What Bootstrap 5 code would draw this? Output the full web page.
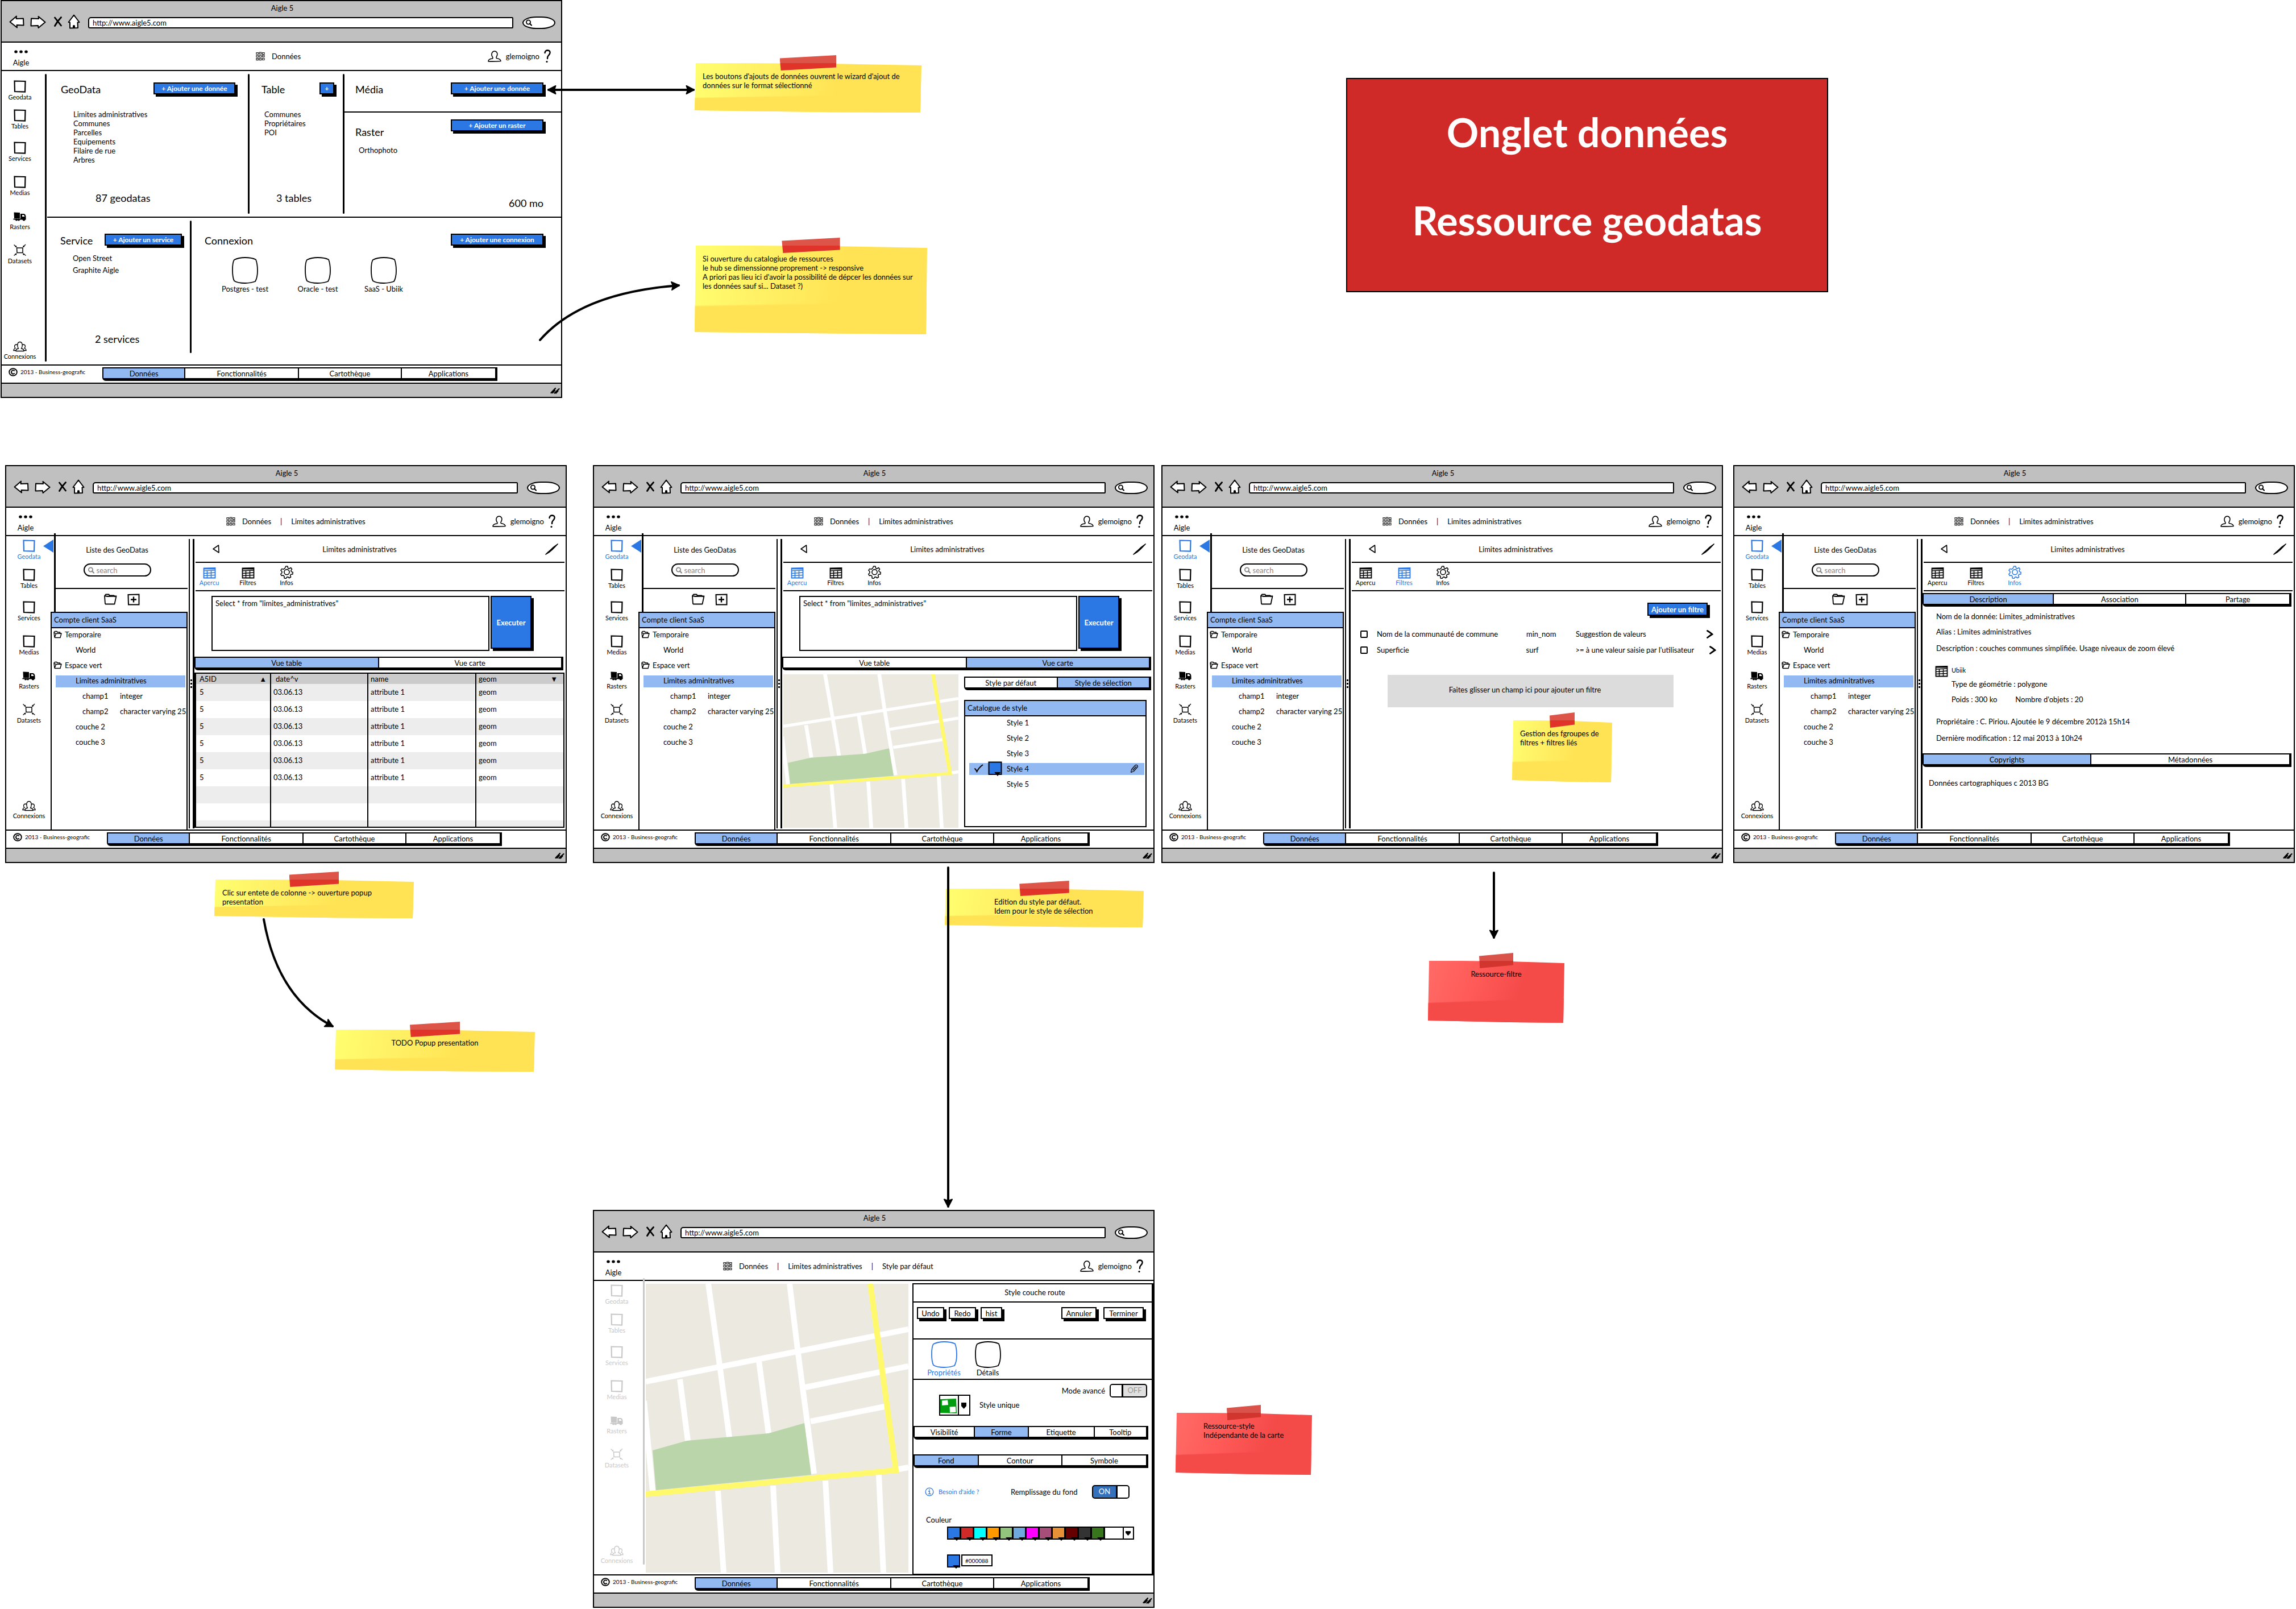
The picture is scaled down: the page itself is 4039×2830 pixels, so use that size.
<!DOCTYPE html>
<html lang="fr">
<head>
<meta charset="utf-8">
<meta name="viewport" content="width=device-width, initial-scale=1">
<title>Aigle 5 - Onglet données</title>
<link href="https://cdn.jsdelivr.net/npm/bootstrap@5.3.0/dist/css/bootstrap.min.css" rel="stylesheet">
<style>
:root { --ink:#000; --blue:#2b78e4; --sky:#93b9f2; --chrome:#c0c0c0; }
body { font-family:Lato,"Noto Sans",sans-serif; font-size:13px; line-height:16px; color:var(--ink); background:#fff; }
svg { display:block; flex:none; }
a { color:inherit; text-decoration:none; }
ul { list-style:none; margin:0; padding:0; }
button, input, textarea { font:inherit; color:inherit; }
.board { position:relative; min-height:2830px; overflow:hidden; }
.title-lg { font-size:18px; line-height:24px; margin:0; font-weight:400; }
.blue { color:var(--blue); }

/* application windows placed on the board */
.win { position:absolute; width:988px; border:2px solid var(--ink); background:#fff; }
.win-1 { left:1px; top:0; }
.win-2 { left:9px; top:818px; }
.win-3 { left:1043px; top:818px; }
.win-4 { left:2043px; top:818px; }
.win-5 { left:3049px; top:818px; }
.win-6 { left:1043px; top:2128px; }
.chrome { background:var(--chrome); border-bottom:2px solid var(--ink); padding:4px 10px 24px 13px; }
.chrome-row { height:22px; margin-top:5px; }
.nav-icons { gap:10px; }
.nav-icons a:nth-child(3) { margin-left:4px; }
.url { height:20px; border:2px solid var(--ink); border-radius:5px 2px 2px 3px; background:#fff; margin:4px 16px 0 14px; padding:0 6px; min-width:0; line-height:16px; }
.lookup { width:58px; height:22px; border:2px solid var(--ink); border-radius:50%/60%; background:#fff; padding-left:3px; margin-top:4px; }
.lookup input { width:34px; border:0; background:none; padding:0; height:14px; }
.topbar { height:50px; border-bottom:2px solid var(--ink); padding-right:18px; }
.brand { width:68px; }
.crumbs { margin-left:319px; }
.crumbs svg { margin-right:12px; }
.win-1 .crumbs { margin-left:379px; }
.win-6 .crumbs { margin-left:159px; }
.user-box { gap:8px; }
.win-body { height:516px; }
.foot { border-top:2px solid var(--ink); padding-top:3px; height:32px; padding-left:12px; }
.foot-note { width:165px; font-size:10px; height:16px; gap:5px; }
.foot-tabs { width:695px; }
.foot-tabs button:nth-child(1) { flex-grow:144; }
.foot-tabs button:nth-child(2) { flex-grow:200; }
.foot-tabs button:nth-child(3) { flex-grow:181; }
.foot-tabs button:nth-child(4) { flex-grow:166; }
.status { background:var(--chrome); border-top:2px solid var(--ink); height:25px; padding-right:2px; }

/* icon rail */
.rail { width:80px; margin-right:4px; padding-bottom:18px; font-size:11px; line-height:12px; }
.win-1 .rail { width:64px; margin-right:12px; padding:10px 0 8px; }
.rail a { height:60px; position:relative; gap:2px; }
.rail a:nth-child(1) { height:42px; }
.rail a:nth-child(2) { height:51px; }
.rail a:nth-child(3) { height:57px; }
.win-2 .rail a:first-child, .win-3 .rail a:first-child, .win-4 .rail a:first-child, .win-5 .rail a:first-child { color:var(--blue); }
.pointer { position:absolute; right:-3px; top:6px; display:none; }
.win-2 .pointer, .win-3 .pointer, .win-4 .pointer, .win-5 .pointer { display:block; }
.win-6 .rail { color:#c8c8c8; margin-right:6px; }
.rule-v { width:3px; background:var(--ink); border-radius:2px; margin:5px 0; flex:none; }
.rule-v.short { margin:5px 0 20px; }
.rule-v.pale { background:#c8c8c8; margin:-5px 2px 17px 0; }

/* sketch buttons and segmented tabs */
.sk-btn { background:var(--blue); color:#fff; border:2px solid var(--ink); border-radius:0; box-shadow:4px 4px 0 #000; height:21px; line-height:16px; padding:0; font-size:12px; font-weight:700; white-space:nowrap; }
.sk-btn.plain { background:#fff; color:#000; font-size:13px; font-weight:400; width:48px; }
.sk-btn.plain.w-hist { width:38px; }
.sk-btn.plain.w-cancel { width:62px; }
.sk-btn.plain.w-done { width:71px; }
.w-add { width:144px; }
.w-wide { width:163px; }
.w-svc { width:136px; }
.w-plus { width:26px; }
.seg { height:24px; border:solid var(--ink); border-width:2px 4px 5px 2px; border-radius:0 0 0 6px; background:#fff; }
.seg button { border:0; border-left:2px solid var(--ink); background:#fff; padding:0; line-height:16px; flex:1 1 0; }
.seg button:first-child { border-left:0; }
.seg button.active { background:var(--sky); }

/* hub */
.hub { min-width:0; }
.hub-top { height:258px; border-bottom:2px solid var(--ink); margin-left:1px; }
.hub-cell { flex:none; width:353px; }
.hub-cell.narrow { width:164px; }
.hub-cell.mid { width:252px; }
.hub-head { padding:19px 22px 0 24px; height:44px; }
.hub-head .sk-btn { margin-bottom:2px; }
.narrow .hub-head { padding:19px 15px 0 21px; }
.hub-head.right { padding-left:19px; padding-right:31px; }
.hub-list { margin:24px 0 0 46px; }
.narrow .hub-list { margin-left:26px; }
.hub-list.roomy { margin-top:9px; line-height:21px; }
.hub-count { margin:auto 0 21px 85px; }
.narrow .hub-count { margin-left:47px; }
.hub-count.low { margin-bottom:33px; }
.media-cell { height:73px; border-bottom:2px solid var(--ink); margin-left:-3px; padding-left:3px; }
.raster-cell .hub-head { padding-top:12px; height:49px; }
.raster-cell .title-lg { margin-top:10px; }
.raster-cell .total { margin:auto 31px 12px; }
.ortho { margin:9px 0 0 25px; }
.hub-head.svc { padding-top:27px; height:52px; padding-right:14px; }
.hub-head.svc.conn { padding-left:23px; padding-right:31px; }
.screens { padding:17px 0 0 30px; }
.screens a { width:128px; gap:1px; }
.screens a.last { width:104px; }

/* resource list panel */
.side { width:235px; flex:none; }
.side-top { border-left:3px solid var(--ink); margin-top:-5px; padding:21px 16px 20px 0; }
.side-tools { border-left:3px solid var(--ink); border-top:2px solid var(--ink); height:42px; padding-top:8px; gap:18px; }
.search-pill { width:119px; height:23px; border:2px solid var(--ink); border-radius:12px; margin-top:16px; padding:0 5px; gap:4px; color:#888; }
.search-pill input { border:0; padding:0; width:80px; background:none; }
.search-pill input::placeholder { color:#888; opacity:1; }
.tree { border:2px solid var(--ink); background:#fff; position:relative; }
.side .tree { margin:0 0 -2px -6px; }
.tree-head { background:var(--sky); border-bottom:2px solid var(--ink); height:27px; padding:4px 4px 0; }
.tree-rows { margin-top:-3px; position:relative; }
.tree-rows li { height:27px; display:flex; align-items:center; white-space:nowrap; margin-right:2px; }
.tree-rows li.on { background:linear-gradient(var(--sky),var(--sky)) 7px 5px/100% 21px no-repeat; }
.tree-rows .lv0 { padding-left:3px; gap:5px; }
.tree-rows .lv1 { padding-left:42px; }
.tree-rows .lv2 { padding-left:54px; }
.fieldname { width:66px; flex:none; }
.splitter { width:10px; margin:5px 0 2px 2px; border-left:2px solid var(--ink); border-right:3px solid var(--ink); flex:none; }

/* resource detail */
.pane { min-width:0; }
.pane-title { height:47px; border-bottom:2px solid var(--ink); margin:0 2px; padding:0 11px 0 30px; }
.pane-title h2 { font-size:13px; line-height:16px; margin:0; padding-right:80px; font-weight:400; }
.pane-tools { height:50px; border-bottom:2px solid var(--ink); margin:0 2px; padding-top:5px; gap:20px; font-size:11px; line-height:14px; }
.pane-tools a { width:48px; height:37px; }
.query { padding:8px 60px 10px 30px; gap:2px; height:115px; }
.query textarea { border:2px solid var(--ink); resize:none; padding:3px 5px; line-height:16px; height:97px; outline:0; }
.query .sk-btn { width:72px; height:93px; font-size:13px; }
.mx-seg { margin-right:4px; }
.datagrid { border:2px solid var(--ink); border-left-width:3px; margin:4px 2px 0 0; height:273px; overflow:hidden; }
.datagrid table { width:100%; table-layout:fixed; border-collapse:collapse; }
.datagrid th { font-weight:400; background:#cbcbcb; height:18px; padding:0 6px; line-height:18px; }
.datagrid td { height:30px; padding:0 6px 3px; }
.datagrid th + th, .datagrid td + td { border-left:2px solid var(--ink); padding-left:4px; }
.datagrid th.inset { padding-left:8px; }
.datagrid tbody tr:nth-child(odd) { background:#ededed; }
.col-id { width:131px; }
.col-date { width:171px; }
.col-name { width:190px; }
.map-row { margin-top:7px; height:270px; gap:10px; padding-left:2px; }
.map-row .tree { margin:17px 12px 0 0; height:224px; }
.tree-rows.styles li { padding-left:73px; }
.tree-rows.styles li.on { padding:0 10px 0 15px; gap:8px; background-position:7px 4px; }
.filters { padding:20px 10px 0 17px; }
.filters .sk-btn { width:106px; height:23px; margin:0 15px 18px 0; line-height:18px; font-size:13px; }
.filter-row { height:28px; }
.filter-row input { appearance:none; width:13px; height:13px; border:2px solid var(--ink); border-radius:2px; margin:0 16px 0 0; }
.filter-row a { width:12px; }
.filter-row.far a { margin-left:6px; }
.f-name { width:292px; }
.f-field { width:87px; }
.f-rule { width:230px; }
.dropzone { background:#dcdcdc; margin:30px 75px 0 48px; height:57px; padding:18px 20px 0 0; }
.info-seg { margin:3px 4px 0 0; }
.info-seg button:nth-child(1) { flex-grow:229; }
.info-seg button:nth-child(2) { flex-grow:233; }
.info-seg button:nth-child(3) { flex-grow:182; }
.info p { margin:0; padding:11px 0 0 24px; }
.info p:first-child { padding-top:9px; }
.info p.wide { padding-top:13px; }
.info p.in { padding-left:51px; }
.info p.in-first { padding-top:4px; }
.info p.apart { padding-top:23px; }
.info p.source { padding:20px 0 0 11px; }
.objects { margin-left:32px; }
.storage { padding:23px 0 0 22px; gap:6px; font-size:11px; }
.meta-seg { margin:19px 4px 0 0; }
.meta-seg button:nth-child(1) { flex-grow:295; }
.meta-seg button:nth-child(2) { flex-grow:350; }

/* style editor */
.map-lg { margin-top:5px; }
.editor { border:2px solid var(--ink); border-right-width:3px; margin:4px 0 0 7px; height:513px; }
.band { border-bottom:2px solid var(--ink); }
.ed-title { height:32px; padding:6px 0 0 8px; }
.ed-actions { height:65px; padding:8px 14px 0 6px; gap:8px; }
.ed-tabs { height:71px; padding:3px 0 0 15px; }
.screen-item { width:77px; }
.ed-style { height:81px; padding:7px 8px 0 45px; }
.ed-style .name { margin:29px 0 0 16px; }
.symbol-pick { width:55px; height:37px; margin-top:19px; }
.ed-seg { margin-right:6px; }
.ed-seg.second { margin-top:26px; }
.seg .w-106 { flex-grow:106; }
.seg .w-94 { flex-grow:94; }
.seg .w-116 { flex-grow:116; }
.seg .w-92 { flex-grow:92; }
.seg .w-112 { flex-grow:112; }
.seg .w-147 { flex-grow:147; }
.seg .w-149 { flex-grow:149; }
.ed-fill { padding:30px 39px 0 20px; }
.help-line { font-size:11px; color:var(--blue); width:151px; gap:8px; }
.ed-label { padding:29px 0 0 22px; }
.ed-colours { padding:4px 0 0 59px; }
.ed-current { margin-top:26px; gap:2px; }
.toggle { border:2px solid var(--ink); border-radius:5px; height:24px; width:66px; overflow:hidden; }
.toggle .knob { width:22px; background:#fff; }
.toggle.off { background:#e0e0e0; color:#999; }
.toggle.off .knob { border-right:3px solid var(--ink); }
.toggle.on { background:#3572bb; color:#fff; }
.toggle.on .knob { border-left:3px solid var(--ink); }
.picker { border:2px solid var(--ink); background:#fff; padding:0; }
.swatches { width:329px; height:23px; }
.sw { width:23px; height:19px; position:relative; border-right:3px solid var(--ink); }
.sw::after { content:""; position:absolute; right:-1px; bottom:-4px; border:6px solid transparent; border-top-color:var(--ink); border-bottom:0; }
.sw.alone { width:19px; border:0; display:block; }
.hexbox { width:55px; height:21px; border:2px solid var(--ink); font-size:10px; padding:0 5px; }

/* sticky notes, banner and arrows */
.note { position:absolute; padding:15px 14px; white-space:nowrap; isolation:isolate; }
.note::before { content:""; position:absolute; inset:0; z-index:-1; clip-path:polygon(2px 0, 25% 0, 60% 1px, 100% 4px, calc(100% - 2px) 100%, 60% 99%, 0 calc(100% - 4px)); background:linear-gradient(179deg,transparent 64%,#ffe354 66%), linear-gradient(100deg,#ffff70 0%,#fff267 25%,#ffea5c 48%,#ffe354 62%); }
.note::after { content:""; position:absolute; left:37.5%; width:25%; top:-14px; height:27px; clip-path:polygon(0 20%,100% 0,100% 80%,2% 100%); background:linear-gradient(#dd5449 0 50%,#e0342a 52%); }
.note.red::before { background:linear-gradient(178deg,transparent 62%,#f44b49 64%), linear-gradient(110deg,#ff6b67 0%,#ff5a57 35%,#f44b49 65%); }
.note.red::after { background:linear-gradient(#d9534a 0 50%,#d2352e 52%); }
.n1 { left:1222px; top:111px; width:399px; height:87px; }
.n2 { left:1222px; top:432px; width:409px; height:156px; }
.n3 { left:377px; top:1547px; width:351px; height:68px; }
.n4 { left:589px; top:1811px; width:352px; height:74px; }
.n5 { left:1662px; top:1563px; width:350px; height:68px; padding-left:87px; }
.n6 { left:2512px; top:1690px; width:240px; height:109px; }
.n7 { left:2068px; top:2485px; width:240px; height:109px; padding-left:49px; }
.n8 { left:2660px; top:1267px; width:176px; height:109px; }
.banner { position:absolute; left:2368px; top:137px; width:848px; height:377px; background:#cf2a27; border:2px solid var(--ink); color:#fff; font-size:70px; line-height:155px; padding-top:16px; font-weight:700; }
.banner h1 { font:inherit; margin:0; }
.arrows { position:absolute; left:0; top:0; pointer-events:none; overflow:visible; }
</style>
<script src="https://cdn.jsdelivr.net/npm/bootstrap@5.3.0/dist/js/bootstrap.bundle.min.js"></script>
</head>
<body>

<svg width="0" height="0" class="position-absolute" aria-hidden="true">
  <symbol id="i-back" viewBox="0 0 27 23"><path d="M1.5 11.5 13 1.5 12.5 6 25 5.5 25.5 17.5 13.5 17 14 21.5Z" fill="#fff" stroke="#000" stroke-width="2" stroke-linejoin="round"/></symbol>
  <symbol id="i-fwd" viewBox="0 0 28 23"><path d="M26.5 12 14.5 2 15 6 2 5.5 1.5 18.5 14 18 14.5 22Z" fill="#fff" stroke="#000" stroke-width="2" stroke-linejoin="round"/></symbol>
  <symbol id="i-stop" viewBox="0 0 14 18"><path d="M1.5 2 12.5 16M12.5 1.5Q6 8 1.5 16.5" fill="none" stroke="#000" stroke-width="2.8" stroke-linecap="round"/></symbol>
  <symbol id="i-home" viewBox="0 0 22 26"><path d="M1.5 14 11 1.5 20.5 14 17.5 14.5 18 24 4 24.5 4 14.5Z" fill="#fff" stroke="#000" stroke-width="2" stroke-linejoin="round"/><path d="M9 24v-4q2-2 4 0v4Z"/></symbol>
  <symbol id="i-mag" viewBox="0 0 12 12"><circle cx="5.5" cy="5" r="3.6" fill="none" stroke="currentColor" stroke-width="1.8"/><path d="m8 7.5 3 3" stroke="currentColor" stroke-width="2.2" stroke-linecap="round"/></symbol>
  <symbol id="i-dots" viewBox="0 0 24 6"><ellipse cx="3" cy="3" rx="2.8" ry="2.5"/><ellipse cx="12" cy="3" rx="2.8" ry="2.5"/><ellipse cx="21" cy="3" rx="2.8" ry="2.5"/></symbol>
  <symbol id="i-grid" viewBox="0 0 16 16"><path fill="none" stroke="#222" stroke-width="1.2" d="M1 1.5h3.4v3H1zM6.3 1.2h3.4v3H6.3zM11.6 1.5H15v3h-3.4zM1 6.5h3.4v3H1zM6.3 6.5h3.4v3H6.3zM11.6 6.2H15v3h-3.4zM1 11.7h3.4v3H1zM6.3 11.7h3.4v3H6.3zM11.6 11.5H15v3h-3.4z"/></symbol>
  <symbol id="i-user" viewBox="0 0 24 20"><path d="M1 19Q1 14.500 8.500 14 9.500 12.500 8 10.500 6 7 7.500 4 9 1 12 1t4.500 3Q17.500 7.500 15.500 10.500 14.500 12.500 15.500 13.500 22.500 14.500 23 18.500Q12 19.500 1 19Z" fill="none" stroke="#000" stroke-width="1.6" stroke-linejoin="round"/></symbol>
  <symbol id="i-help" viewBox="0 0 12 24"><path d="M1.500 6Q2 1.500 6.500 1.500 11 2 10.500 6 10 9 7.500 11 6 12.500 6 16" fill="none" stroke="#000" stroke-width="2.4" stroke-linecap="round"/><circle cx="5" cy="21.500" r="1.600"/></symbol>
  <symbol id="i-box" viewBox="0 0 22 22"><path d="M1.500 1.500 20.500 2 20 20.500 2 20Z" fill="none" stroke="currentColor" stroke-width="2.200"/></symbol>
  <symbol id="i-truck" viewBox="0 0 24 16"><path d="M1.500.5 12 1v10H2Z" fill="currentColor"/><path d="M13 3h6q3 .5 3.500 5v4.500H13Z" fill="currentColor"/><path d="M16 5h3l1.500 3H16Z" fill="#fff"/><path d="M.5 12.500h22" stroke="currentColor" stroke-width="2"/><g fill="currentColor"><circle cx="6" cy="13.500" r="2"/><circle cx="10" cy="13.500" r="2"/><circle cx="19" cy="13.300" r="2.300"/></g></symbol>
  <symbol id="i-data" viewBox="0 0 24 22"><path d="M6.500 7h10.500v8.500H7Z" fill="none" stroke="currentColor" stroke-width="1.500"/><path d="M1.500 1.500 6 5.500M22 1 17.500 5.500M1.500 20.500 6 17M22.500 20.500 17.500 17" stroke="currentColor" stroke-width="1.300"/><path d="M6.500 6 3 5 5.500 2.800ZM17 6 20.500 5 18 2.500ZM6.500 16.500 3 17.500 5.500 20ZM17 16.500 20.500 17.500 18 20Z" fill="currentColor"/></symbol>
  <symbol id="i-people" viewBox="0 0 24 19"><g fill="none" stroke="currentColor" stroke-width="1.300"><path d="M5 17.500Q5 13.500 9.500 13 7.500 10 7.800 6 8.500 1.500 12 1.500T16.200 6Q16.500 10 14.500 13 19 13.500 19 17.500Z"/><path d="M8 7Q5.500 5 3.300 7 1.500 9.500 4 12.500 1 13.500 1 16.500H5M16 7Q18.500 5 20.700 7 22.500 9.500 20 12.500 23 13.500 23 16.500H19"/></g></symbol>
  <symbol id="i-folder" viewBox="0 0 23 20"><path d="M2 18.500 1 4 3 1.500 8.500 1.500 9.500 3.500H17.500L19 6M2 18.500 18.500 18.500 21.500 4.500 6 5 1 4" fill="none" stroke="#000" stroke-width="1.800" stroke-linejoin="round"/></symbol>
  <symbol id="i-folder-sm" viewBox="0 0 15 14"><path d="M2 12.500 1 3 2.500 1.500H6L7 3h4.500V5M2 12.500 12 12.500 14 5 4.500 5.500 1 3.500M2 12.500 4.500 5.500" fill="none" stroke="#000" stroke-width="1.400" stroke-linejoin="round"/></symbol>
  <symbol id="i-plus" viewBox="0 0 22 21"><path d="M1.500 2 20.500 1.500 20.500 19.500 2 19.500Z" fill="none" stroke="#000" stroke-width="2"/><path d="M11 5.500v10M6 10.500h10" stroke="#000" stroke-width="2.400"/></symbol>
  <symbol id="i-table" viewBox="0 0 23 20"><path d="M1.500 1.500 21.500 1 21.500 18.500 1.500 18.500Z" fill="none" stroke="currentColor" stroke-width="1.800"/><path d="M1.500 2.500h20" stroke="currentColor" stroke-width="2"/><path d="M1.500 6 21.500 5M1.500 10.500 21.500 9M1.500 14.500 21.500 13.500M7.500 6V19M14.500 5.500V19" stroke="currentColor" stroke-width="1.500"/></symbol>
  <symbol id="i-gear" viewBox="0 0 23 23"><path d="M9.700 1h3.200l.6 3.200 2.200 1 2.900-1.700 2 2.400-1.700 2.800.7 1.900 2.600.9-.3 3.400-3 .2-1.300 2 1 2.900-2.700 1.700-2.400-2-1.900.4-1.600 2.600-3-.9v-3.200L5.300 17l-3 .6-1.500-2.900L3 12.500 2.900 10.300.9 8.100l1.900-2.700 3 .8 2.500-1.900Z" fill="none" stroke="currentColor" stroke-width="1.500" stroke-linejoin="round"/><circle cx="11.500" cy="11.200" r="4.600" fill="none" stroke="currentColor" stroke-width="1.600"/></symbol>
  <symbol id="i-prev" viewBox="0 0 12 15"><path d="M1 7.500 10.500 1 11 14Z" fill="none" stroke="#000" stroke-width="1.600" stroke-linejoin="round"/></symbol>
  <symbol id="i-slash" viewBox="0 0 23 20"><path d="M22.500.5Q14 6 9 11.500 4 15.500.5 19.500 8 15.500 12.500 11 17 6.500 22.500.5Z" stroke="#000" stroke-width="1.200"/></symbol>
  <symbol id="i-copy" viewBox="0 0 16 15"><ellipse cx="8" cy="7.500" rx="6.800" ry="6.300" fill="none" stroke="#000" stroke-width="1.900"/><path d="M10.800 5.500Q7.500 3 5.300 6 4.300 9 6.800 10.500 9 11.200 10.800 9.300" fill="none" stroke="#000" stroke-width="1.900"/></symbol>
  <symbol id="i-grip" viewBox="0 0 17 12"><path d="M1.500 10Q4 7 9 2M7.500 10.500Q10 7.500 15.500 3M4 10l4-4.500M10 10.500l3.500-4" stroke="#000" stroke-width="2.200" stroke-linecap="round" fill="none"/></symbol>
  <symbol id="i-screen" viewBox="0 0 46 47"><path d="M4 5Q12 1 23 1 35 1 42 4.500 45 12 45 24 45 36 41 43 33 46 23 46 10 46 4 42 1 36 1 23 1 9 4 5Z" fill="#fff" stroke="currentColor" stroke-width="1.800"/></symbol>
  <symbol id="i-check" viewBox="0 0 17 15"><path d="M1.500 7.500Q4 9.500 5.500 13 9 6 16 1" fill="none" stroke="#000" stroke-width="2"/></symbol>
  <symbol id="i-pencil" viewBox="0 0 15 16"><path d="M1.500 14.500 2.500 9.500 9.500 1.500Q13 .5 13.500 4.500L6.500 12.500ZM4.500 11 11 4" fill="none" stroke="#000" stroke-width="1.200" stroke-linejoin="round"/></symbol>
  <symbol id="i-swatch" viewBox="0 0 25 26"><path d="M1.500 1.500H23.500V23H1.500Z" fill="#2b78e4" stroke="#000" stroke-width="2"/><path d="M12 19.500h9.500L17 25.500Z" stroke="#000"/></symbol>
  <symbol id="i-next" viewBox="0 0 12 15"><path d="M1.500 1.500Q6 4 10 7.500 6 10 1.500 13.500" fill="none" stroke="#000" stroke-width="2.800" stroke-linecap="round"/></symbol>
  <symbol id="i-info" viewBox="0 0 16 16"><circle cx="8" cy="8" r="6.900" fill="none" stroke="currentColor" stroke-width="1.300"/><path d="M6 7h2.300v4.500M5.500 11.700h5.500" stroke="currentColor" stroke-width="1.300" fill="none"/><circle cx="8" cy="4.500" r="1" fill="currentColor"/></symbol>
  <symbol id="i-check-tile" viewBox="0 0 30 28"><path d="M0 2 28 1 29 27 0 26Z" fill="#009e0f"/><path d="M3 4.500 13 3.500 14 12 3 13ZM16.500 15.500 27 15 27.500 25 17 25.500Z" fill="#fff"/></symbol>
  <symbol id="map" viewBox="0 0 462 508" preserveAspectRatio="none">
    <path fill="#ece9e1" d="M0 0h462v508H0z"/>
    <path d="M0 172 462 80M110 0 130 143 147 270M253 0 267 115 296 334M60 168 74 276M199 136 216 263M281 182 462 145M290 242 420 216M-3 206 12 364M440 327 462 323M127 364 137 508M224 355 232 508M316 346 325 508M410 336 418 508" fill="none" stroke="#fff" stroke-width="10"/>
    <path fill="#bbd5ab" d="M12 293 72 276 216 263 279 245 291 336 18 363Z"/>
    <path d="M0 370 440 328 395 0" fill="none" stroke="#fff96b" stroke-width="10"/>
  </symbol>
</svg>

<template id="chrome">
  <header class="chrome">
    <div class="text-center">Aigle 5</div>
    <div class="chrome-row d-flex align-items-center">
      <nav class="nav-icons d-flex align-items-center">
        <a href="#" aria-label="Précédent"><svg width="27" height="23"><use href="#i-back"/></svg></a>
        <a href="#" aria-label="Suivant"><svg width="28" height="23"><use href="#i-fwd"/></svg></a>
        <a href="#" aria-label="Arrêter"><svg width="14" height="18"><use href="#i-stop"/></svg></a>
        <a href="#" aria-label="Accueil"><svg width="22" height="26"><use href="#i-home"/></svg></a>
      </nav>
      <input class="url flex-grow-1" type="text" aria-label="Adresse" value="http://www.aigle5.com">
      <label class="lookup d-flex align-items-center"><svg width="12" height="12"><use href="#i-mag"/></svg><input type="text" aria-label="Recherche web"></label>
    </div>
  </header>
</template>

<template id="brand">
  <a href="#" class="brand d-flex flex-column align-items-center justify-content-center gap-2"><svg width="24" height="6" class="mt-2"><use href="#i-dots"/></svg>Aigle</a>
</template>

<template id="user">
  <div class="user-box d-flex align-items-center ms-auto">
    <svg width="24" height="20"><use href="#i-user"/></svg><a href="#">glemoigno</a>
    <a href="#" aria-label="Aide"><svg width="12" height="24"><use href="#i-help"/></svg></a>
  </div>
</template>

<template id="rail">
  <nav class="rail d-flex flex-column flex-shrink-0">
    <a href="#" class="d-flex flex-column align-items-center justify-content-end"><svg width="22" height="22"><use href="#i-box"/></svg>Geodata<svg class="pointer" width="18" height="23"><path d="M0 11.500 18 0v23Z" fill="#2b78e4"/></svg></a>
    <a href="#" class="d-flex flex-column align-items-center justify-content-end"><svg width="22" height="22"><use href="#i-box"/></svg>Tables</a>
    <a href="#" class="d-flex flex-column align-items-center justify-content-end"><svg width="22" height="22"><use href="#i-box"/></svg>Services</a>
    <a href="#" class="d-flex flex-column align-items-center justify-content-end"><svg width="22" height="22"><use href="#i-box"/></svg>Medias</a>
    <a href="#" class="d-flex flex-column align-items-center justify-content-end"><svg width="24" height="20"><use href="#i-truck"/></svg>Rasters</a>
    <a href="#" class="d-flex flex-column align-items-center justify-content-end"><svg width="24" height="22"><use href="#i-data"/></svg>Datasets</a>
    <a href="#" class="d-flex flex-column align-items-center justify-content-end mt-auto"><svg width="24" height="19"><use href="#i-people"/></svg>Connexions</a>
  </nav>
</template>

<template id="foot">
  <footer>
    <div class="foot d-flex align-items-start">
      <div class="foot-note d-flex align-items-center"><svg width="16" height="15"><use href="#i-copy"/></svg>2013 - Business-geografic</div>
      <div class="seg foot-tabs d-flex"><button type="button" class="active">Données</button><button type="button">Fonctionnalités</button><button type="button">Cartothèque</button><button type="button">Applications</button></div>
    </div>
    <div class="status d-flex align-items-center justify-content-end"><svg width="17" height="12"><use href="#i-grip"/></svg></div>
  </footer>
</template>

<template id="crumbs">
  <nav class="crumbs d-flex align-items-center"><svg width="16" height="16"><use href="#i-grid"/></svg><a href="#">Données</a><span class="mx-3">|</span><a href="#">Limites administratives</a></nav>
</template>

<template id="side">
  <aside class="side d-flex flex-column">
    <div class="side-top d-flex flex-column align-items-center">
      <div>Liste des GeoDatas</div>
      <label class="search-pill d-flex align-items-center"><svg width="12" height="12"><use href="#i-mag"/></svg><input type="text" placeholder="search" aria-label="Rechercher une donnée"></label>
    </div>
    <div class="side-tools d-flex align-items-start justify-content-center">
      <a href="#" aria-label="Nouveau dossier"><svg width="23" height="20"><use href="#i-folder"/></svg></a>
      <a href="#" aria-label="Ajouter"><svg width="22" height="21"><use href="#i-plus"/></svg></a>
    </div>
    <div class="tree flex-grow-1">
      <div class="tree-head">Compte client SaaS</div>
      <ul class="tree-rows">
        <li class="lv0"><svg width="15" height="14"><use href="#i-folder-sm"/></svg>Temporaire</li>
        <li class="lv1">World</li>
        <li class="lv0"><svg width="15" height="14"><use href="#i-folder-sm"/></svg>Espace vert</li>
        <li class="lv1 on">Limites adminitratives</li>
        <li class="lv2"><span class="fieldname">champ1</span>integer</li>
        <li class="lv2"><span class="fieldname">champ2</span>character varying 25</li>
        <li class="lv1">couche 2</li>
        <li class="lv1">couche 3</li>
      </ul>
    </div>
  </aside>
  <div class="splitter d-flex align-items-center justify-content-center"><svg width="3" height="16"><path d="M0 0h3v3H0zM0 6h3v3H0zM0 12h3v3H0z"/></svg></div>
</template>

<template id="pane-title">
  <div class="pane-title d-flex align-items-center">
    <a href="#" aria-label="Retour"><svg width="12" height="15"><use href="#i-prev"/></svg></a>
    <h2 class="flex-grow-1 text-center">Limites administratives</h2>
    <a href="#" aria-label="Modifier"><svg width="23" height="20"><use href="#i-slash"/></svg></a>
  </div>
</template>

<template id="query">
  <div class="query d-flex">
    <textarea class="flex-grow-1" aria-label="Requête">Select * from "limites_administratives"</textarea>
    <button type="button" class="sk-btn">Executer</button>
  </div>
</template>

<main class="board">

  <!-- hub -->
  <section class="win win-1">
    <div data-tpl="chrome"></div>
    <div class="topbar d-flex">
      <div data-tpl="brand"></div>
      <nav class="crumbs d-flex align-items-center"><svg width="16" height="16"><use href="#i-grid"/></svg><a href="#">Données</a></nav>
      <div data-tpl="user"></div>
    </div>
    <div class="win-body d-flex">
      <div data-tpl="rail"></div>
      <div class="rule-v"></div>
      <div class="hub flex-grow-1 d-flex flex-column">
        <div class="hub-top d-flex">
          <section class="hub-cell d-flex flex-column">
            <div class="hub-head d-flex align-items-center justify-content-between"><h2 class="title-lg">GeoData</h2><button type="button" class="sk-btn w-add">+ Ajouter une donnée</button></div>
            <ul class="hub-list"><li>Limites administratives</li><li>Communes</li><li>Parcelles</li><li>Equipements</li><li>Filaire de rue</li><li>Arbres</li></ul>
            <div class="title-lg hub-count">87 geodatas</div>
          </section>
          <div class="rule-v"></div>
          <section class="hub-cell narrow d-flex flex-column">
            <div class="hub-head d-flex align-items-center justify-content-between"><h2 class="title-lg">Table</h2><button type="button" class="sk-btn w-plus" aria-label="Ajouter une table">+</button></div>
            <ul class="hub-list"><li>Communes</li><li>Propriétaires</li><li>POI</li></ul>
            <div class="title-lg hub-count">3 tables</div>
          </section>
          <div class="rule-v"></div>
          <div class="flex-grow-1 d-flex flex-column">
            <section class="media-cell"><div class="hub-head right d-flex align-items-center justify-content-between"><h2 class="title-lg">Média</h2><button type="button" class="sk-btn w-wide">+ Ajouter une donnée</button></div></section>
            <section class="raster-cell flex-grow-1 d-flex flex-column">
              <div class="hub-head right d-flex align-items-start justify-content-between"><h2 class="title-lg">Raster</h2><button type="button" class="sk-btn w-wide">+ Ajouter un raster</button></div>
              <div class="ortho">Orthophoto</div>
              <div class="title-lg total text-end">600 mo</div>
            </section>
          </div>
        </div>
        <div class="d-flex flex-grow-1">
          <section class="hub-cell mid d-flex flex-column">
            <div class="hub-head svc d-flex align-items-center justify-content-between"><h2 class="title-lg">Service</h2><button type="button" class="sk-btn w-svc">+ Ajouter un service</button></div>
            <ul class="hub-list roomy"><li>Open Street</li><li>Graphite Aigle</li></ul>
            <div class="title-lg hub-count low">2 services</div>
          </section>
          <div class="rule-v short"></div>
          <section class="flex-grow-1">
            <div class="hub-head svc conn d-flex align-items-center justify-content-between"><h2 class="title-lg">Connexion</h2><button type="button" class="sk-btn w-wide">+ Ajouter une connexion</button></div>
            <div class="screens d-flex">
              <a href="#" class="d-flex flex-column align-items-center"><svg width="46" height="47"><use href="#i-screen"/></svg>Postgres - test</a>
              <a href="#" class="d-flex flex-column align-items-center"><svg width="46" height="47"><use href="#i-screen"/></svg>Oracle - test</a>
              <a href="#" class="last d-flex flex-column align-items-center"><svg width="46" height="47"><use href="#i-screen"/></svg>SaaS - Ubiik</a>
            </div>
          </section>
        </div>
      </div>
    </div>
    <div data-tpl="foot"></div>
  </section>

  <!-- aperçu, vue table -->
  <section class="win win-2">
    <div data-tpl="chrome"></div>
    <div class="topbar d-flex"><div data-tpl="brand"></div><div data-tpl="crumbs"></div><div data-tpl="user"></div></div>
    <div class="win-body d-flex">
      <div data-tpl="rail"></div>
      <div data-tpl="side"></div>
      <div class="pane flex-grow-1">
        <div data-tpl="pane-title"></div>
        <nav class="pane-tools d-flex">
          <a href="#" class="blue d-flex flex-column align-items-center justify-content-end"><svg width="23" height="20"><use href="#i-table"/></svg>Apercu</a>
          <a href="#" class="d-flex flex-column align-items-center justify-content-end"><svg width="23" height="20"><use href="#i-table"/></svg>Filtres</a>
          <a href="#" class="d-flex flex-column align-items-center justify-content-end"><svg width="23" height="23"><use href="#i-gear"/></svg>Infos</a>
        </nav>
        <div data-tpl="query"></div>
        <div class="seg mx-seg d-flex"><button type="button" class="active">Vue table</button><button type="button">Vue carte</button></div>
        <div class="datagrid">
          <table>
            <colgroup><col class="col-id"><col class="col-date"><col class="col-name"><col></colgroup>
            <thead><tr><th><span class="d-flex justify-content-between">A5ID<span>▲</span></span></th><th class="inset">date^v</th><th>name</th><th><span class="d-flex justify-content-between pe-1">geom<span>▼</span></span></th></tr></thead>
            <tbody>
              <tr><td>5</td><td>03.06.13</td><td>attribute 1</td><td>geom</td></tr>
              <tr><td>5</td><td>03.06.13</td><td>attribute 1</td><td>geom</td></tr>
              <tr><td>5</td><td>03.06.13</td><td>attribute 1</td><td>geom</td></tr>
              <tr><td>5</td><td>03.06.13</td><td>attribute 1</td><td>geom</td></tr>
              <tr><td>5</td><td>03.06.13</td><td>attribute 1</td><td>geom</td></tr>
              <tr><td>5</td><td>03.06.13</td><td>attribute 1</td><td>geom</td></tr>
              <tr><td></td><td></td><td></td><td></td></tr>
              <tr><td></td><td></td><td></td><td></td></tr>
              <tr><td></td><td></td><td></td><td></td></tr>
            </tbody>
          </table>
        </div>
      </div>
    </div>
    <div data-tpl="foot"></div>
  </section>

  <!-- aperçu, vue carte -->
  <section class="win win-3">
    <div data-tpl="chrome"></div>
    <div class="topbar d-flex"><div data-tpl="brand"></div><div data-tpl="crumbs"></div><div data-tpl="user"></div></div>
    <div class="win-body d-flex">
      <div data-tpl="rail"></div>
      <div data-tpl="side"></div>
      <div class="pane flex-grow-1">
        <div data-tpl="pane-title"></div>
        <nav class="pane-tools d-flex">
          <a href="#" class="blue d-flex flex-column align-items-center justify-content-end"><svg width="23" height="20"><use href="#i-table"/></svg>Apercu</a>
          <a href="#" class="d-flex flex-column align-items-center justify-content-end"><svg width="23" height="20"><use href="#i-table"/></svg>Filtres</a>
          <a href="#" class="d-flex flex-column align-items-center justify-content-end"><svg width="23" height="23"><use href="#i-gear"/></svg>Infos</a>
        </nav>
        <div data-tpl="query"></div>
        <div class="seg mx-seg d-flex"><button type="button">Vue table</button><button type="button" class="active">Vue carte</button></div>
        <div class="map-row d-flex">
          <svg width="308" height="270"><use href="#map"/></svg>
          <div class="flex-grow-1 pt-1">
            <div class="seg mx-seg d-flex"><button type="button">Style par défaut</button><button type="button" class="active">Style de sélection</button></div>
            <div class="tree">
              <div class="tree-head">Catalogue de style</div>
              <ul class="tree-rows styles">
                <li>Style 1</li><li>Style 2</li><li>Style 3</li>
                <li class="on"><svg width="17" height="15"><use href="#i-check"/></svg><svg width="25" height="26"><use href="#i-swatch"/></svg><span>Style 4</span><a href="#" class="ms-auto" aria-label="Modifier le style"><svg width="15" height="16"><use href="#i-pencil"/></svg></a></li>
                <li>Style 5</li>
              </ul>
            </div>
          </div>
        </div>
      </div>
    </div>
    <div data-tpl="foot"></div>
  </section>

  <!-- filtres -->
  <section class="win win-4">
    <div data-tpl="chrome"></div>
    <div class="topbar d-flex"><div data-tpl="brand"></div><div data-tpl="crumbs"></div><div data-tpl="user"></div></div>
    <div class="win-body d-flex">
      <div data-tpl="rail"></div>
      <div data-tpl="side"></div>
      <div class="pane flex-grow-1">
        <div data-tpl="pane-title"></div>
        <nav class="pane-tools d-flex">
          <a href="#" class="d-flex flex-column align-items-center justify-content-end"><svg width="23" height="20"><use href="#i-table"/></svg>Apercu</a>
          <a href="#" class="blue d-flex flex-column align-items-center justify-content-end"><svg width="23" height="20"><use href="#i-table"/></svg>Filtres</a>
          <a href="#" class="d-flex flex-column align-items-center justify-content-end"><svg width="23" height="23"><use href="#i-gear"/></svg>Infos</a>
        </nav>
        <div class="filters">
          <div class="text-end"><button type="button" class="sk-btn">Ajouter un filtre</button></div>
          <div class="filter-row d-flex align-items-center"><label class="f-name d-flex align-items-center"><input type="checkbox">Nom de la communauté de commune</label><span class="f-field">min_nom</span><span class="f-rule">Suggestion de valeurs</span><a href="#" aria-label="Ouvrir"><svg width="12" height="15"><use href="#i-next"/></svg></a></div>
          <div class="filter-row far d-flex align-items-center"><label class="f-name d-flex align-items-center"><input type="checkbox">Superficie</label><span class="f-field">surf</span><span class="f-rule">&gt;= à une valeur saisie par l'utilisateur</span><a href="#" aria-label="Ouvrir"><svg width="12" height="15"><use href="#i-next"/></svg></a></div>
          <div class="dropzone text-center">Faites glisser un champ ici pour ajouter un filtre</div>
        </div>
      </div>
    </div>
    <div data-tpl="foot"></div>
  </section>

  <!-- infos -->
  <section class="win win-5">
    <div data-tpl="chrome"></div>
    <div class="topbar d-flex"><div data-tpl="brand"></div><div data-tpl="crumbs"></div><div data-tpl="user"></div></div>
    <div class="win-body d-flex">
      <div data-tpl="rail"></div>
      <div data-tpl="side"></div>
      <div class="pane flex-grow-1">
        <div data-tpl="pane-title"></div>
        <nav class="pane-tools d-flex">
          <a href="#" class="d-flex flex-column align-items-center justify-content-end"><svg width="23" height="20"><use href="#i-table"/></svg>Apercu</a>
          <a href="#" class="d-flex flex-column align-items-center justify-content-end"><svg width="23" height="20"><use href="#i-table"/></svg>Filtres</a>
          <a href="#" class="blue d-flex flex-column align-items-center justify-content-end"><svg width="23" height="23"><use href="#i-gear"/></svg>Infos</a>
        </nav>
        <div class="seg info-seg d-flex"><button type="button" class="active">Description</button><button type="button">Association</button><button type="button">Partage</button></div>
        <div class="info">
          <p>Nom de la donnée: Limites_administratives</p>
          <p>Alias : Limites administratives</p>
          <p class="wide">Description : couches communes simplifiée. Usage niveaux de zoom élevé</p>
          <div class="storage d-flex"><svg width="23" height="20"><use href="#i-table"/></svg>Ubiik</div>
          <p class="in in-first">Type de géométrie : polygone</p>
          <p class="in">Poids : 300 ko<span class="objects">Nombre d'objets : 20</span></p>
          <p class="apart">Propriétaire : C. Piriou. Ajoutée le 9 décembre 2012à 15h14</p>
          <p class="wide">Dernière modification : 12 mai 2013 à 10h24</p>
        </div>
        <div class="seg meta-seg d-flex"><button type="button" class="active">Copyrights</button><button type="button">Métadonnées</button></div>
        <div class="info"><p class="source">Données cartographiques c 2013 BG</p></div>
      </div>
    </div>
    <div data-tpl="foot"></div>
  </section>

  <!-- éditeur de style -->
  <section class="win win-6">
    <div data-tpl="chrome"></div>
    <div class="topbar d-flex"><div data-tpl="brand"></div>
      <nav class="crumbs d-flex align-items-center"><svg width="16" height="16"><use href="#i-grid"/></svg><a href="#">Données</a><span class="mx-3">|</span><a href="#">Limites administratives</a><span class="mx-3">|</span><a href="#">Style par défaut</a></nav>
      <div data-tpl="user"></div></div>
    <div class="win-body d-flex">
      <div data-tpl="rail"></div>
      <div class="rule-v pale"></div>
      <svg width="462" height="508" class="map-lg"><use href="#map"/></svg>
      <div class="editor flex-grow-1">
        <div class="band ed-title text-center">Style couche route</div>
        <div class="band ed-actions d-flex">
          <button type="button" class="sk-btn plain">Undo</button><button type="button" class="sk-btn plain">Redo</button><button type="button" class="sk-btn plain w-hist me-auto">hist</button>
          <button type="button" class="sk-btn plain w-cancel me-1">Annuler</button><button type="button" class="sk-btn plain w-done">Terminer</button>
        </div>
        <div class="band ed-tabs d-flex">
          <a href="#" class="screen-item blue d-flex flex-column align-items-center"><svg width="46" height="47"><use href="#i-screen"/></svg>Propriétés</a>
          <a href="#" class="screen-item d-flex flex-column align-items-center"><svg width="46" height="47"><use href="#i-screen"/></svg>Détails</a>
        </div>
        <div class="ed-style d-flex align-items-start">
          <button type="button" class="picker symbol-pick d-flex align-items-stretch" aria-label="Choisir un symbole">
            <svg width="30" height="28" class="mt-1"><use href="#i-check-tile"/></svg>
            <svg width="20" height="33" class="ms-auto"><path d="M1 0v33" stroke="#000" stroke-width="2"/><path d="M6 12h9v6l-4.500 5L6 18Z"/></svg>
          </button>
          <span class="name">Style unique</span>
          <label class="d-flex align-items-center ms-auto gap-2">Mode avancé
            <input type="checkbox" class="visually-hidden"><span class="toggle off d-flex"><span class="knob"></span><span class="flex-grow-1 text-center lh-base">OFF</span></span></label>
        </div>
        <div class="seg ed-seg d-flex"><button type="button" class="w-106">Visibilité</button><button type="button" class="w-94 active">Forme</button><button type="button" class="w-116">Etiquette</button><button type="button" class="w-92">Tooltip</button></div>
        <div class="seg ed-seg second d-flex"><button type="button" class="w-112 active">Fond</button><button type="button" class="w-147">Contour</button><button type="button" class="w-149">Symbole</button></div>
        <div class="ed-fill d-flex align-items-center">
          <a href="#" class="help-line d-flex align-items-center"><svg width="16" height="16"><use href="#i-info"/></svg>Besoin d'aide ?</a>
          <label class="d-flex align-items-center justify-content-between flex-grow-1">Remplissage du fond
            <input type="checkbox" class="visually-hidden" checked><span class="toggle on d-flex"><span class="flex-grow-1 text-center lh-base">ON</span><span class="knob"></span></span></label>
        </div>
        <div class="ed-label">Couleur</div>
        <div class="ed-colours">
          <button type="button" class="picker swatches d-flex" aria-label="Choisir une couleur">
            <span class="sw" style="background:#2b78e4"></span><span class="sw" style="background:#cf2a27"></span><span class="sw" style="background:#00ffff"></span><span class="sw" style="background:#ff9900"></span><span class="sw" style="background:#93c47d"></span><span class="sw" style="background:#6fa8dc"></span><span class="sw" style="background:#ff00ff"></span><span class="sw" style="background:#a64d79"></span><span class="sw" style="background:#e69138"></span><span class="sw" style="background:#660000"></span><span class="sw" style="background:#333333"></span><span class="sw" style="background:#38761d"></span>
            <svg width="18" height="19" class="ms-auto"><path d="M1 0v19" stroke="#000" stroke-width="2"/><path d="M5 6h9v3l-4.500 5L5 9Z"/></svg>
          </button>
          <div class="ed-current d-flex">
            <button type="button" class="picker" aria-label="Couleur active"><span class="sw alone" style="background:#2b78e4"></span></button>
            <input type="text" class="hexbox" aria-label="Code couleur" value="#000088">
          </div>
        </div>
      </div>
    </div>
    <div data-tpl="foot"></div>
  </section>

  <div class="banner text-center"><h1>Onglet données<br>Ressource geodatas</h1></div>

  <div class="note n1">Les boutons d'ajouts de données ouvrent le wizard d'ajout de<br>données sur le format sélectionné</div>
  <div class="note n2">Si ouverture du catalogiue de ressources<br>le hub se dimenssionne proprement -&gt; responsive<br>A priori pas lieu ici d'avoir la possibilité de dépcer les données sur<br>les données sauf si... Dataset ?)</div>
  <div class="note n3">Clic sur entete de colonne -&gt; ouverture popup<br>presentation</div>
  <div class="note n4 text-center">TODO Popup presentation</div>
  <div class="note n5">Edition du style par défaut.<br>Idem pour le style de sélection</div>
  <div class="note red n6 text-center">Ressource-filtre</div>
  <div class="note red n7">Ressource-style<br>Indépendante de la carte</div>
  <div class="note n8">Gestion des fgroupes de<br>filtres + filtres liés</div>

  <svg class="arrows" width="10" height="10" aria-hidden="true">
    <defs><marker id="tip" viewBox="0 0 16 18" refX="14" refY="9" markerWidth="16" markerHeight="18" markerUnits="userSpaceOnUse" orient="auto-start-reverse"><path d="M1.500 2 15 9 1.500 16 4 9Z" stroke="#000" stroke-width="2" stroke-linejoin="round"/></marker></defs>
    <g fill="none" stroke="#000" stroke-width="4" stroke-linecap="round">
      <path d="M965 158H1220" marker-start="url(#tip)" marker-end="url(#tip)"/>
      <path d="M950 598Q1022 515 1194 502" marker-end="url(#tip)"/>
      <path d="M464 1617Q488 1754 585 1805" marker-end="url(#tip)"/>
      <path d="M1668 1526V2122" marker-end="url(#tip)"/>
      <path d="M2628 1535V1649" marker-end="url(#tip)"/>
    </g>
  </svg>
</main>

<script>
// Fill every placeholder with its shared template.
document.querySelectorAll('[data-tpl]').forEach(function (slot) {
  slot.replaceWith(document.getElementById(slot.dataset.tpl).content.cloneNode(true));
});
</script>
</body>
</html>
